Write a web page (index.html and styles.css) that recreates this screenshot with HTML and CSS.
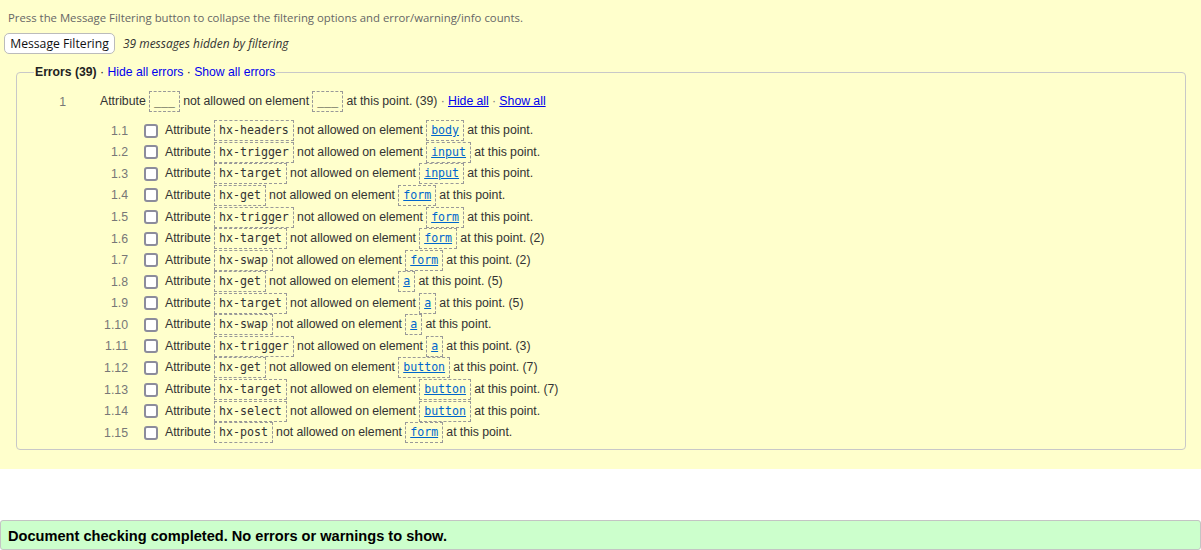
FILE: index.html
```html
<!DOCTYPE html>
<html>
<head>
<meta charset="utf-8">
<link rel="stylesheet" href="styles.css">
</head>
<body>
<div class="panel">
  <p class="hint">Press the Message Filtering button to collapse the filtering options and error/warning/info counts.</p>
  <div class="filterbar">
    <button class="filterbtn">Message Filtering</button>
    <span class="hidden-count">39 messages hidden by filtering</span>
  </div>
  <fieldset class="errors">
    <legend class="legend"><b>Errors (39)</b> · <a class="leglink">Hide all errors</a> · <a class="leglink">Show all errors</a></legend>
    <div class="group">
      <span class="gnum">1</span>
      <span class="msg">Attribute <code class="box">___</code> not allowed on element <code class="box">___</code> at this point. (39) <span class="dot">·</span> <a class="glink">Hide all</a> <span class="dot">·</span> <a class="glink">Show all</a></span>
    </div>
    <div class="subs">
      <div class="row"><span class="num">1.1</span><span class="chk"></span><span class="msg">Attribute <code class="box">hx-headers</code> not allowed on element <code class="box"><a class="el">body</a></code> at this point.</span></div>
      <div class="row"><span class="num">1.2</span><span class="chk"></span><span class="msg">Attribute <code class="box">hx-trigger</code> not allowed on element <code class="box"><a class="el">input</a></code> at this point.</span></div>
      <div class="row"><span class="num">1.3</span><span class="chk"></span><span class="msg">Attribute <code class="box">hx-target</code> not allowed on element <code class="box"><a class="el">input</a></code> at this point.</span></div>
      <div class="row"><span class="num">1.4</span><span class="chk"></span><span class="msg">Attribute <code class="box">hx-get</code> not allowed on element <code class="box"><a class="el">form</a></code> at this point.</span></div>
      <div class="row"><span class="num">1.5</span><span class="chk"></span><span class="msg">Attribute <code class="box">hx-trigger</code> not allowed on element <code class="box"><a class="el">form</a></code> at this point.</span></div>
      <div class="row"><span class="num">1.6</span><span class="chk"></span><span class="msg">Attribute <code class="box">hx-target</code> not allowed on element <code class="box"><a class="el">form</a></code> at this point. (2)</span></div>
      <div class="row"><span class="num">1.7</span><span class="chk"></span><span class="msg">Attribute <code class="box">hx-swap</code> not allowed on element <code class="box"><a class="el">form</a></code> at this point. (2)</span></div>
      <div class="row"><span class="num">1.8</span><span class="chk"></span><span class="msg">Attribute <code class="box">hx-get</code> not allowed on element <code class="box"><a class="el">a</a></code> at this point. (5)</span></div>
      <div class="row"><span class="num">1.9</span><span class="chk"></span><span class="msg">Attribute <code class="box">hx-target</code> not allowed on element <code class="box"><a class="el">a</a></code> at this point. (5)</span></div>
      <div class="row"><span class="num">1.10</span><span class="chk"></span><span class="msg">Attribute <code class="box">hx-swap</code> not allowed on element <code class="box"><a class="el">a</a></code> at this point.</span></div>
      <div class="row"><span class="num">1.11</span><span class="chk"></span><span class="msg">Attribute <code class="box">hx-trigger</code> not allowed on element <code class="box"><a class="el">a</a></code> at this point. (3)</span></div>
      <div class="row"><span class="num">1.12</span><span class="chk"></span><span class="msg">Attribute <code class="box">hx-get</code> not allowed on element <code class="box"><a class="el">button</a></code> at this point. (7)</span></div>
      <div class="row"><span class="num">1.13</span><span class="chk"></span><span class="msg">Attribute <code class="box">hx-target</code> not allowed on element <code class="box"><a class="el">button</a></code> at this point. (7)</span></div>
      <div class="row"><span class="num">1.14</span><span class="chk"></span><span class="msg">Attribute <code class="box">hx-select</code> not allowed on element <code class="box"><a class="el">button</a></code> at this point.</span></div>
      <div class="row"><span class="num">1.15</span><span class="chk"></span><span class="msg">Attribute <code class="box">hx-post</code> not allowed on element <code class="box"><a class="el">form</a></code> at this point.</span></div>
    </div>
  </fieldset>
</div>
<div class="spacer"></div>
<div class="done">Document checking completed. No errors or warnings to show.</div>
</body>
</html>
```

FILE: styles.css
```css
html, body {
  margin: 0;
  padding: 0;
  background: #ffffff;
}
body {
  font-family: "Liberation Sans", Arial, sans-serif;
  font-size: 12.3px;
  color: #333333;
}
.panel {
  background: #ffffcc;
  height: 469px;
  box-sizing: border-box;
  padding-top: 10px;
  overflow: hidden;
}
.hint {
  margin: 0 0 0 8px;
  font-family: "Open Sans", sans-serif;
  font-size: 11.35px;
  color: #666666;
  line-height: 16px;
}
.filterbar {
  display: flex;
  align-items: center;
  margin-top: 7px;
  padding-left: 4px;
  height: 21px;
}
.filterbtn {
  font-family: "Open Sans", sans-serif;
  font-size: 12.2px;
  color: #111111;
  background: #ffffff;
  border: 1px solid #bbbbbb;
  border-radius: 5px;
  height: 21px;
  width: 111px;
  padding: 0;
  margin: 0;
  line-height: 19px;
}
.hidden-count {
  margin-left: 8px;
  font-family: "Open Sans", sans-serif;
  font-style: italic;
  font-size: 11.95px;
  color: #333333;
}
.errors {
  margin: 11px 15px 0 16px;
  padding: 0 0 6px 0;
  border: 1px solid #c8c8c8;
  border-radius: 4px;
  min-width: 0;
}
.legend {
  margin-left: 17px;
  padding: 0 1px;
  color: #222222;
  font-size: 12.2px;
  line-height: 14px;
}
.leglink {
  color: #0000ee;
  text-decoration: none;
}
.group {
  display: flex;
  align-items: center;
  height: 21px;
  margin-top: 12px;
}
.gnum {
  width: 49px;
  text-align: right;
  color: #777777;
}
.group .msg {
  margin-left: 34px;
}
.dot {
  color: #777777;
}
.glink {
  color: #0000ee;
  text-decoration: underline;
}
.subs {
  margin-top: 8px;
}
.row {
  display: flex;
  align-items: center;
  height: 21.57px;
}
.num {
  width: 111px;
  text-align: right;
  color: #777777;
}
.chk {
  width: 14px;
  height: 14px;
  box-sizing: border-box;
  border: 2px solid #8c8c9c;
  border-radius: 3px;
  background: #ffffff;
  margin-left: 16px;
  flex: none;
}
.row .msg {
  margin-left: 7px;
}
.msg {
  white-space: nowrap;
  word-spacing: -0.2px;
}
.box {
  display: inline-block;
  font-family: "DejaVu Sans Mono", monospace;
  font-size: 11.6px;
  word-spacing: 0;
  line-height: 15px;
  padding: 2px 4px;
  border: 1px dashed #999999;
  color: #333333;
  vertical-align: middle;
}
.el {
  color: #0066cc;
  text-decoration: underline;
}
.spacer {
  height: 51px;
}
.done {
  box-sizing: border-box;
  height: 30px;
  background: #ccffcc;
  border: 1px solid #c4c4c4;
  border-radius: 3px;
  padding-left: 7px;
  padding-top: 1px;
  font-weight: bold;
  font-size: 14.6px;
  line-height: 28px;
  color: #000000;
}
```
